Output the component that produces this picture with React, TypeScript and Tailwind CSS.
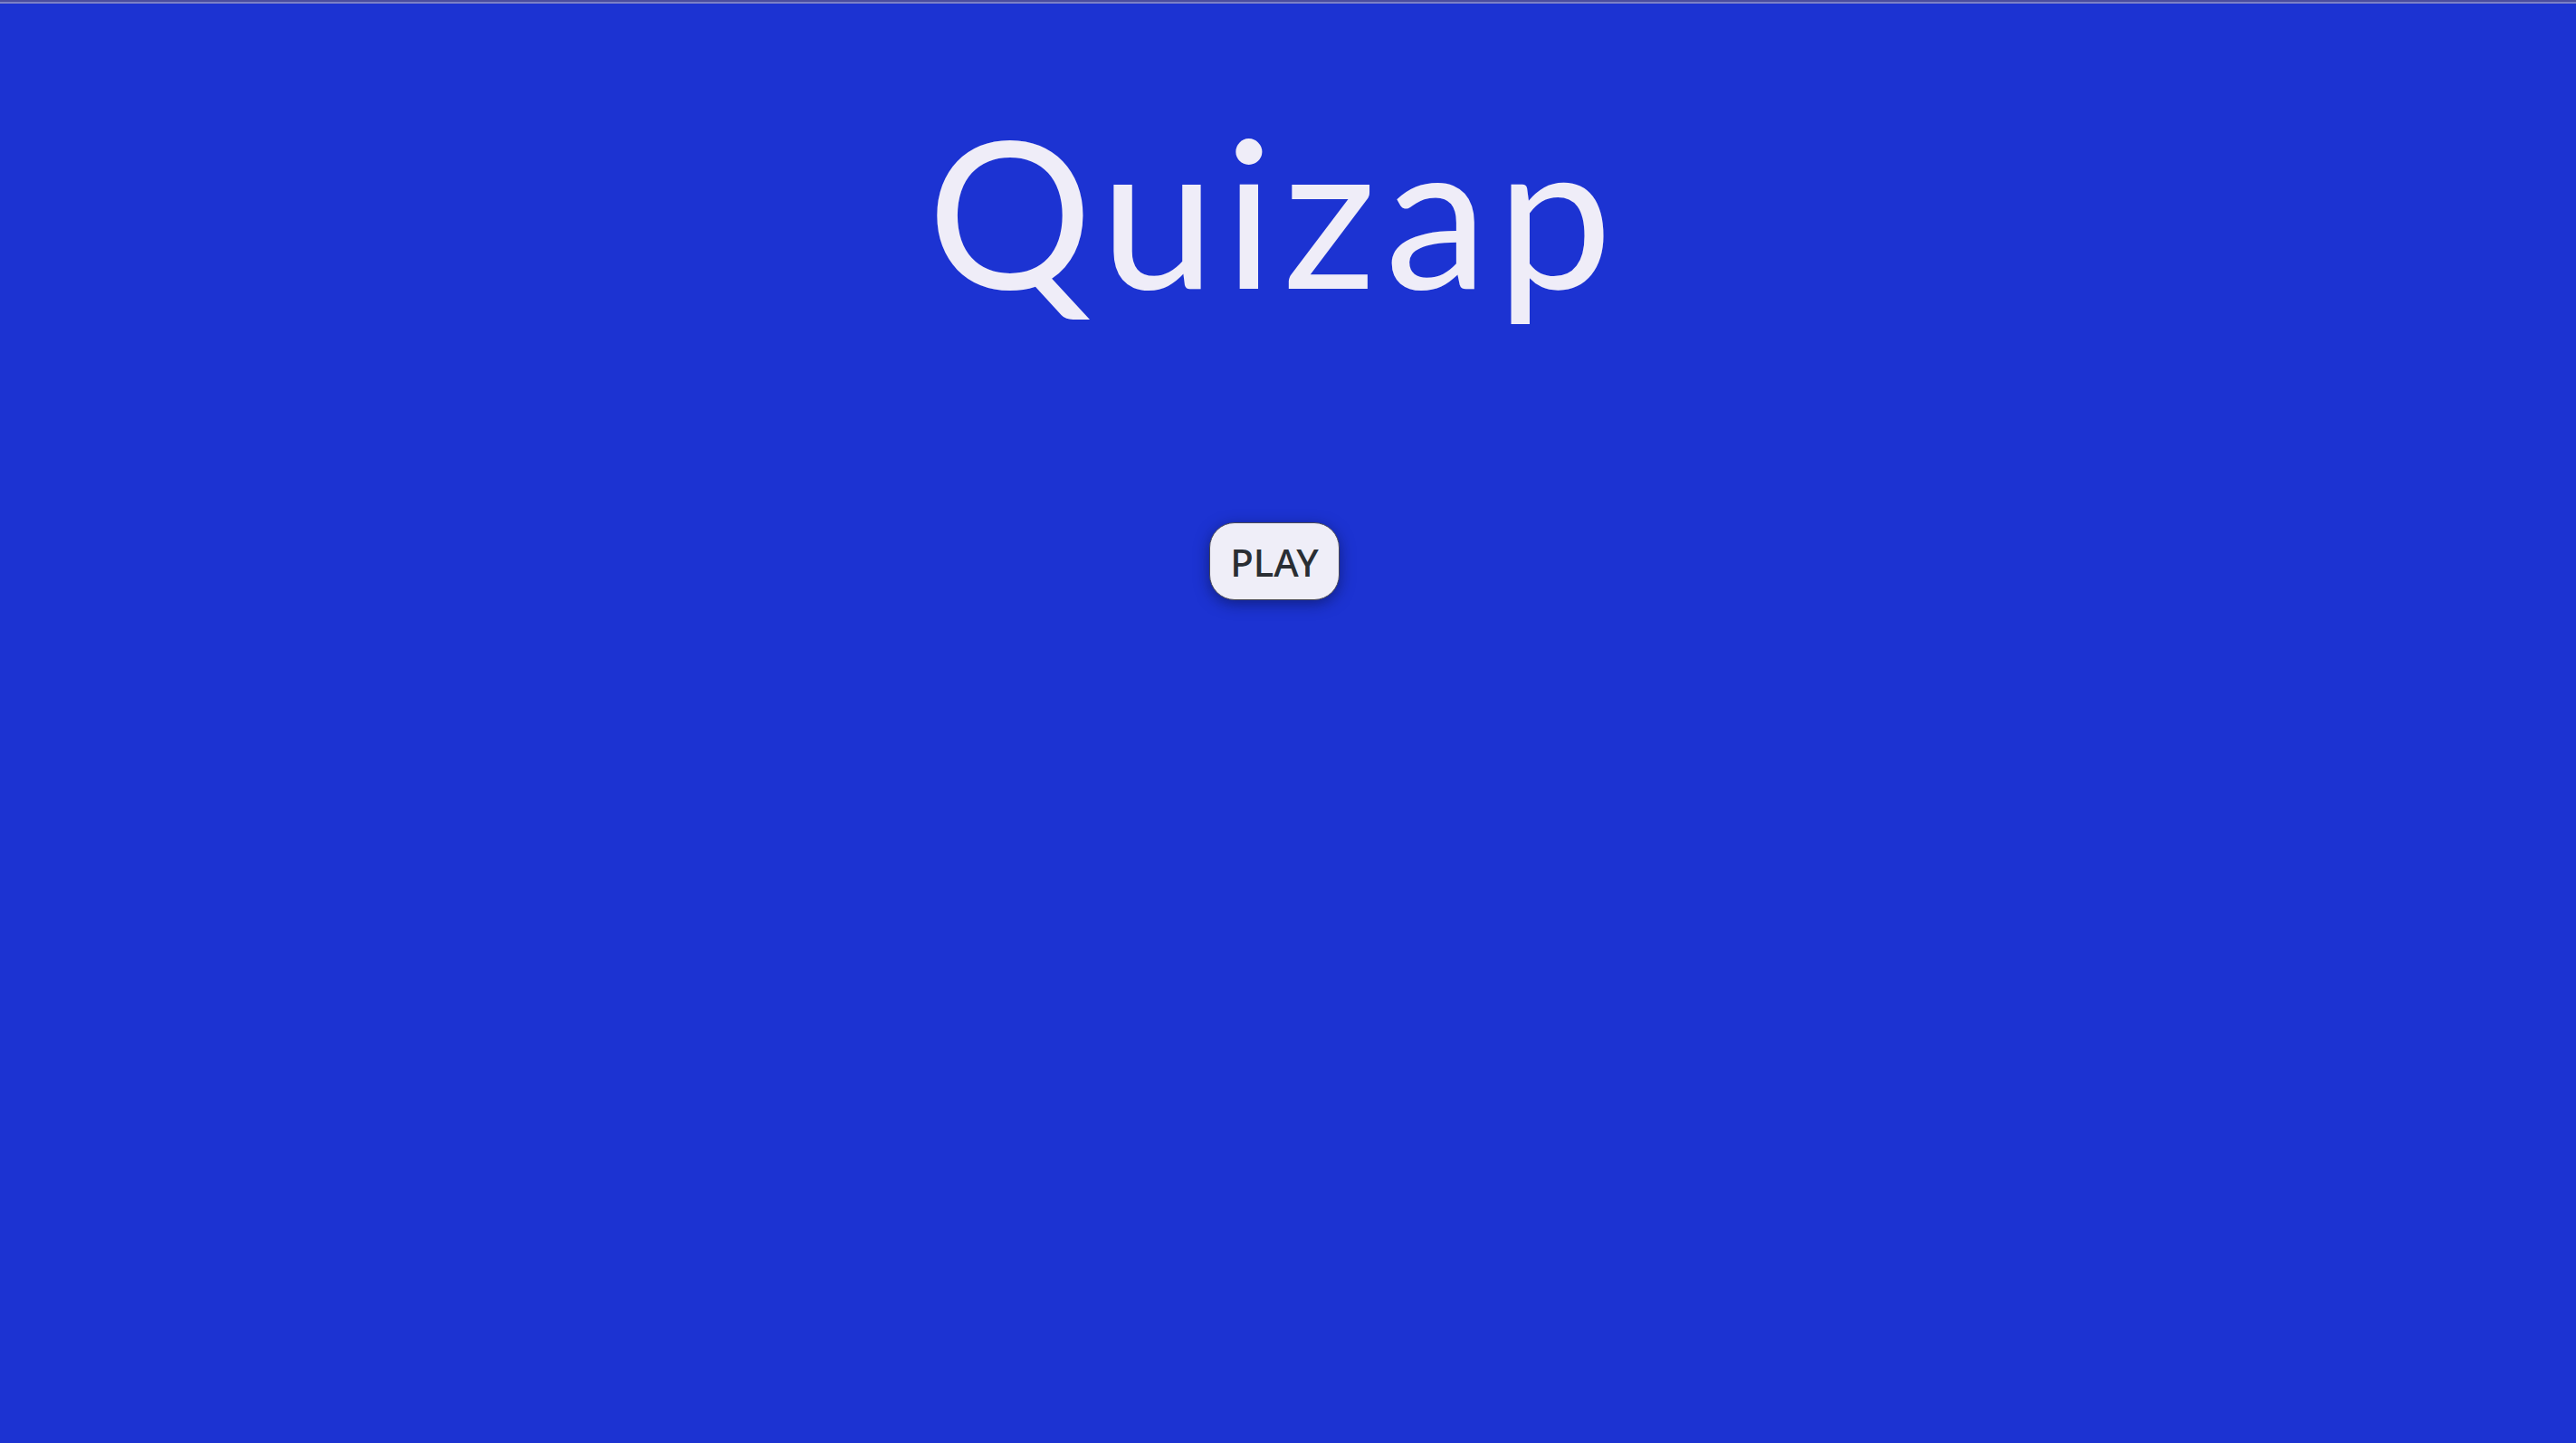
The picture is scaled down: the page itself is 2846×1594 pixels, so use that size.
import React from 'react';

const App: React.FC = () => {
  return (
    <div className="min-h-screen w-full bg-[#1c33d2] flex flex-col">
      {/* top strip */}
      <div className="h-[2px] bg-[#4b4d9f]" />
      <div className="h-[2px] bg-[#7c80c6]" />

      <main className="flex flex-col items-center pr-[30px]">
        <h1
          className="mt-[113px] text-[228px] leading-none font-normal tracking-[10px] text-[#efedf8]"
          style={{ fontFamily: 'Lato, "Noto Sans", sans-serif' }}
        >
          Quizap
        </h1>

        <button
          className="mt-[232px] w-[144px] h-[86px] rounded-[28px] border-[1.5px] border-[#4a4a55] bg-[#efeef8] text-[#2a2e33] text-[42px] font-medium shadow-[0_4px_16px_rgba(10,20,80,0.6)]"
          style={{ fontFamily: '"Noto Sans", sans-serif' }}
        >
          PLAY
        </button>
      </main>
    </div>
  );
};

export default App;
